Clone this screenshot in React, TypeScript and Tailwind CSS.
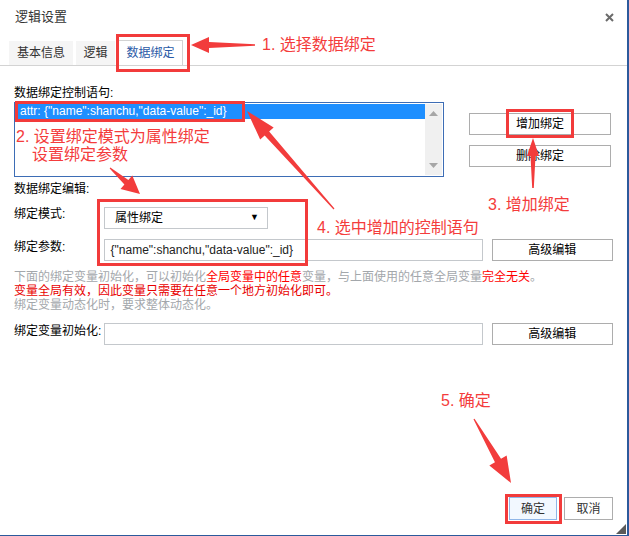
import React from 'react'

type ArrowProps = {
  x1: number
  y1: number
  x2: number
  y2: number
  head: number
  half: number
  tail: number
  neck: number
}

// tapered annotation arrow: thin tail, wide head at (x2, y2)
function Arrow({ x1, y1, x2, y2, head, half, tail, neck }: ArrowProps) {
  const len = Math.hypot(x2 - x1, y2 - y1)
  const ux = (x2 - x1) / len
  const uy = (y2 - y1) / len
  const nx = -uy
  const ny = ux
  const bx = x2 - ux * head
  const by = y2 - uy * head
  const pts = [
    [x1 + nx * tail, y1 + ny * tail],
    [bx + nx * neck, by + ny * neck],
    [bx + nx * half, by + ny * half],
    [x2, y2],
    [bx - nx * half, by - ny * half],
    [bx - nx * neck, by - ny * neck],
    [x1 - nx * tail, y1 - ny * tail],
  ]
  return <polygon points={pts.map((p) => p.join(',')).join(' ')} fill="#f23c3c" />
}

function Btn({ label, className }: { label: string; className: string }) {
  return (
    <div className={`flex h-[22px] items-center justify-center border border-[#adadad] bg-white text-black ${className}`}>
      {label}
    </div>
  )
}

export default function App() {
  return (
    <div className="relative flex h-[536px] w-[629px] flex-col overflow-hidden border-r-2 border-b border-[#2c5a9c] bg-white font-['Liberation_Sans','Noto_Sans_CJK_SC',sans-serif] text-[12px] text-black">
      {/* Title bar */}
      <div className="flex h-[34px] items-center justify-between pr-[13px] pl-[15px]">
        <span className="text-[13px] text-[#333]">逻辑设置</span>
        <svg width="9" height="9" viewBox="0 0 9 9">
          <path d="M1 1 L8 8 M8 1 L1 8" stroke="#6b6b6b" strokeWidth="2" />
        </svg>
      </div>

      {/* Tabs */}
      <div className="flex h-[32px] items-end gap-[3px] border-b border-[#d3d3d3] pl-[9px]">
        <div className="flex h-[24px] w-[64px] items-center justify-center bg-[#f5f5f5] text-[#333]">基本信息</div>
        <div className="flex h-[24px] w-[39px] items-center justify-center bg-[#f5f5f5] text-[#333]">逻辑</div>
        <div className="flex h-[25px] w-[65px] items-center justify-center border border-b-0 border-[#d3d3d3] bg-white text-[#2a5aa6]">
          数据绑定
        </div>
      </div>

      {/* Content */}
      <div className="px-[14px] pt-[20px]">
        <div className="leading-[14px]">数据绑定控制语句:</div>
        <div className="mt-[2px] flex items-start">
          <div className="flex h-[75px] w-[430px] border border-[#3d6db5] p-[1px]">
            <div className="flex-1">
              <div className="h-[15px] bg-[#1e8fff] pl-[4px] leading-[15px] text-white">
                attr: {'{"name":shanchu,"data-value":_id}'}
              </div>
            </div>
            <div className="flex w-[17px] flex-col items-center justify-between bg-[#f0f0f0] py-[7px]">
              <svg width="9" height="5" viewBox="0 0 9 5">
                <path d="M0 5 L4.5 0 L9 5 Z" fill="#a6a6a6" />
              </svg>
              <svg width="9" height="5" viewBox="0 0 9 5">
                <path d="M0 0 L9 0 L4.5 5 Z" fill="#a6a6a6" />
              </svg>
            </div>
          </div>
          <div className="mt-[11px] ml-[25px] flex flex-col gap-[10px]">
            <Btn label="增加绑定" className="w-[142px]" />
            <Btn label="删除绑定" className="w-[142px]" />
          </div>
        </div>

        <div className="mt-[5px] leading-[14px]">数据绑定编辑:</div>

        <div className="mt-[11px] flex items-start">
          <div className="w-[90px] leading-[14px]">绑定模式:</div>
          <div className="flex h-[22px] w-[164px] items-center justify-between border border-[#c4c8cc] pr-[8px] pl-[10px]">
            <span>属性绑定</span>
            <span className="text-[9px]">▼</span>
          </div>
        </div>

        <div className="mt-[10px] flex items-start">
          <div className="w-[90px] pt-[1px] leading-[14px]">绑定参数:</div>
          <div className="flex h-[22px] w-[381px] items-center border border-[#c4c8cc] pl-[6px] text-[#222]">
            {'{"name":shanchu,"data-value":_id}'}
          </div>
          <Btn label="高级编辑" className="ml-[9px] w-[122px]" />
        </div>

        <div className="mt-[9px] leading-[14px] text-[#a3a7ab]">
          <div>
            下面的绑定变量初始化，可以初始化<span className="text-[#f00]">全局变量中的任意</span>变量，与上面使用的任意全局变量
            <span className="text-[#f00]">完全无关</span>。
          </div>
          <div className="text-[#e80000]">变量全局有效，因此变量只需要在任意一个地方初始化即可。</div>
          <div>绑定变量动态化时，要求整体动态化。</div>
        </div>

        <div className="mt-[11px] flex items-start">
          <div className="w-[90px] pt-[1px] leading-[14px]">绑定变量初始化:</div>
          <div className="h-[22px] w-[381px] border border-[#c4c8cc]" />
          <Btn label="高级编辑" className="ml-[9px] w-[122px]" />
        </div>
      </div>

      {/* Footer */}
      <div className="mt-auto flex justify-end gap-[7px] pr-[14px] pb-[15px]">
        <div className="flex h-[23px] w-[48px] items-center justify-center border border-[#8fb6e8] bg-[#f2f8ff] text-[#333]">确定</div>
        <div className="flex h-[23px] w-[49px] items-center justify-center border border-[#adadad] bg-white text-[#333]">取消</div>
      </div>

      {/* resize grip */}
      <svg className="absolute right-[1px] bottom-[1px]" width="10" height="10" viewBox="0 0 10 10">
        <path d="M10 0 L10 10 L0 10 Z" fill="#5a5a5a" />
      </svg>

      {/* Annotations */}
      <div className="pointer-events-none absolute inset-0 text-[#f43c3c]">
        <div className="absolute top-[34px] left-[116px] h-[38px] w-[74px] border-[3px] border-[#f23b3b]" />
        <div className="absolute top-[101px] left-[15px] h-[21px] w-[230px] border-[3px] border-[#f23b3b]" />
        <div className="absolute top-[109px] left-[506px] h-[29px] w-[68px] border-[3px] border-[#f23b3b]" />
        <div className="absolute top-[199px] left-[97px] h-[67px] w-[211px] border-[3px] border-[#f23b3b]" />
        <div className="absolute top-[494px] left-[505px] h-[30px] w-[57px] border-[3px] border-[#f23b3b]" />

        <span className="absolute top-[35px] left-[262px] text-[16px] leading-[20px]">1. 选择数据绑定</span>
        <span className="absolute top-[127px] left-[16px] text-[16px] leading-[20px]">2. 设置绑定模式为属性绑定</span>
        <span className="absolute top-[145px] left-[32px] text-[16px] leading-[20px]">设置绑定参数</span>
        <span className="absolute top-[195px] left-[488px] text-[16px] leading-[20px]">3. 增加绑定</span>
        <span className="absolute top-[218px] left-[317px] text-[16px] leading-[20px]">4. 选中增加的控制语句</span>
        <span className="absolute top-[391px] left-[441px] text-[16px] leading-[20px]">5. 确定</span>

        <svg className="absolute inset-0" width="629" height="536" viewBox="0 0 629 536">
          <Arrow x1={255} y1={45} x2={191} y2={45} head={18} half={8} tail={0.8} neck={3} />
          <Arrow x1={110} y1={168} x2={140} y2={194} head={18} half={9} tail={0.5} neck={3} />
          <Arrow x1={533} y1={188} x2={533} y2={138} head={18} half={6} tail={0.8} neck={2.5} />
          <Arrow x1={334} y1={209} x2={247} y2={111} head={30} half={9} tail={0.6} neck={3} />
          <Arrow x1={474} y1={419} x2={511} y2={483} head={26} half={10} tail={0.6} neck={3.5} />
        </svg>
      </div>
    </div>
  )
}
